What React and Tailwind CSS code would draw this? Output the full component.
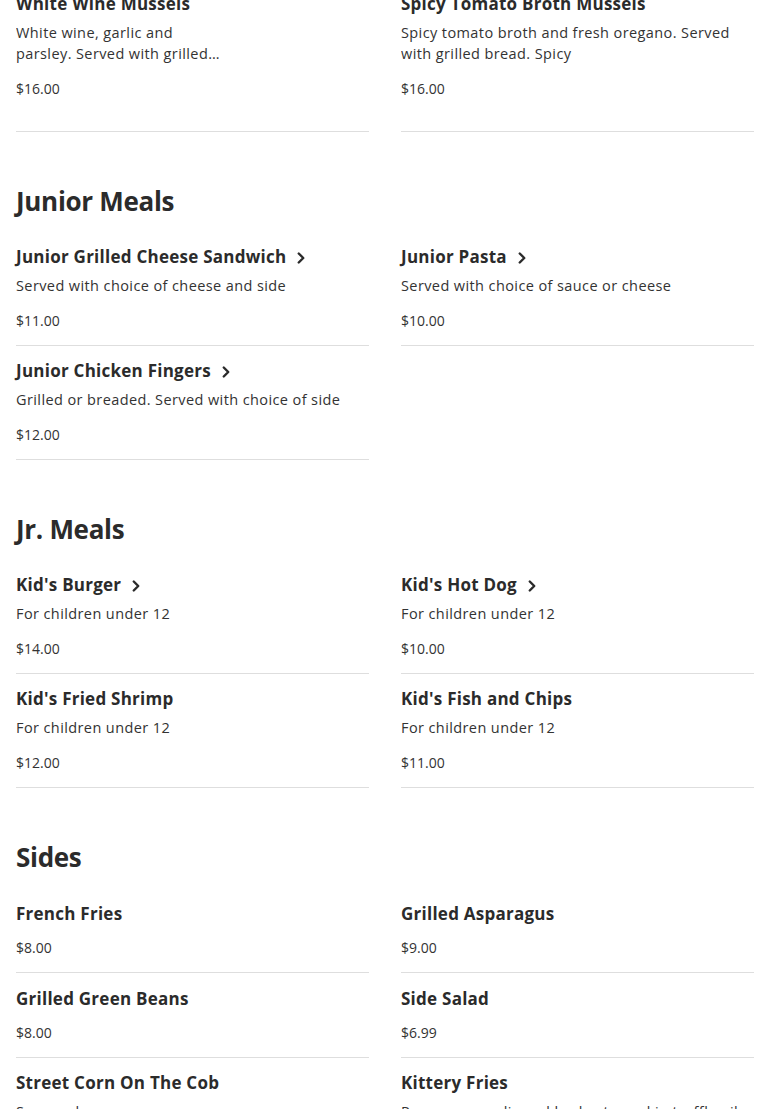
import { ChevronRight } from "lucide-react";

const sections = [
  {
    title: null,
    items: [
      {
        name: "White Wine Mussels",
        desc: "White wine, garlic and parsley. Served with grilled bread and lemon",
        price: "$16.00",
        narrow: true,
      },
      {
        name: "Spicy Tomato Broth Mussels",
        desc: "Spicy tomato broth and fresh oregano. Served with grilled bread. Spicy",
        price: "$16.00",
      },
    ],
  },
  {
    title: "Junior Meals",
    items: [
      { name: "Junior Grilled Cheese Sandwich", desc: "Served with choice of cheese and side", price: "$11.00", more: true },
      { name: "Junior Pasta", desc: "Served with choice of sauce or cheese", price: "$10.00", more: true },
      { name: "Junior Chicken Fingers", desc: "Grilled or breaded. Served with choice of side", price: "$12.00", more: true },
    ],
  },
  {
    title: "Jr. Meals",
    items: [
      { name: "Kid's Burger", desc: "For children under 12", price: "$14.00", more: true },
      { name: "Kid's Hot Dog", desc: "For children under 12", price: "$10.00", more: true },
      { name: "Kid's Fried Shrimp", desc: "For children under 12", price: "$12.00" },
      { name: "Kid's Fish and Chips", desc: "For children under 12", price: "$11.00" },
    ],
  },
  {
    title: "Sides",
    items: [
      { name: "French Fries", price: "$8.00" },
      { name: "Grilled Asparagus", price: "$9.00" },
      { name: "Grilled Green Beans", price: "$8.00" },
      { name: "Side Salad", price: "$6.99" },
      { name: "Street Corn On The Cob", desc: "Seasonal", price: "$7.00" },
      { name: "Kittery Fries", desc: "Parmesan, garlic and herbs, tossed in truffle oil", price: "$9.00" },
    ],
  },
];

const MenuItem = ({ item }) => (
  <div
    className={`border-b border-[#dedede] ${item.desc ? "pt-[13px]" : "pt-[14px]"} ${item.narrow ? "pb-[32px]" : "pb-[14px]"}`}
  >
    <div className="flex items-center gap-[6px] h-6">
      <h3 className="text-[17px] font-bold leading-6 tracking-[0.25px] text-[#2b2b2b] whitespace-nowrap">
        {item.name}
      </h3>
      {item.more && <ChevronRight size={18} strokeWidth={3.2} className="text-[#2b2b2b] mt-[1px]" />}
    </div>
    {item.desc && (
      <p
        className={`mt-[6px] text-[14.5px] leading-[21px] tracking-[0.4px] text-[#333] line-clamp-2 ${item.narrow ? "max-w-[208px]" : ""}`}
      >
        {item.desc}
      </p>
    )}
    <p className={`${item.desc ? "mt-[14px]" : "mt-[11px]"} text-[14px] leading-[21px] text-[#333]`}>
      {item.price}
    </p>
  </div>
);

export default function App() {
  return (
    <div
      className="bg-white min-h-screen overflow-hidden px-4 -mt-[21px]"
      style={{ fontFamily: '"Open Sans", "Liberation Sans", sans-serif' }}
    >
      {sections.map((s, i) => (
        <section key={i}>
          {s.title && (
            <h2 className="mt-[51px] mb-[13px] text-[26px] font-bold leading-9 tracking-[-0.3px] text-[#2b2b2b]">
              {s.title}
            </h2>
          )}
          <div className="grid grid-cols-2 gap-x-8">
            {s.items.map((item) => (
              <MenuItem key={item.name} item={item} />
            ))}
          </div>
        </section>
      ))}
    </div>
  );
}
